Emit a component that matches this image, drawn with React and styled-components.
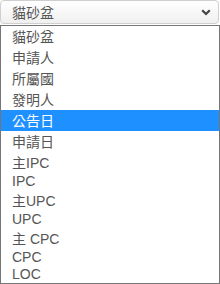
import React from 'react'
import styled, { createGlobalStyle } from 'styled-components'

const GlobalStyle = createGlobalStyle`
  html, body {
    margin: 0;
    padding: 0;
    background: #fff;
  }
  body {
    font-family: "Liberation Sans", "Noto Sans CJK TC", sans-serif;
  }
`

const Wrapper = styled.div`
  width: 220px;
  height: 284px;
  display: flex;
  flex-direction: column;
  overflow: hidden;
`

const SelectBox = styled.div`
  width: 219px;
  height: 30px;
  box-sizing: border-box;
  display: flex;
  align-items: center;
  justify-content: space-between;
  padding: 0 7px 0 11px;
  border: 1px solid #cfcfcf;
  border-radius: 4px;
  background: linear-gradient(#ffffff, #f0f0f0);
  color: #555;
  font-size: 14px;
`

const Chevron = styled.svg`
  width: 10px;
  height: 7px;
`

const ListBox = styled.div`
  flex: 1;
  margin-top: 1px;
  border: 1px solid #767676;
  display: flex;
  flex-direction: column;
  background: #fff;
`

const Option = styled.div`
  padding: 0 0 1px 11px;
  font-size: 14px;
  line-height: normal;
  color: ${p => (p.$active ? '#fff' : '#555')};
  background: ${p => (p.$active ? '#1e90ff' : 'transparent')};
`

const options = [
  '貓砂盆',
  '申請人',
  '所屬國',
  '發明人',
  '公告日',
  '申請日',
  '主IPC',
  'IPC',
  '主UPC',
  'UPC',
  '主 CPC',
  'CPC',
  'LOC'
]

const App = () => (
  <Wrapper>
    <GlobalStyle />
    <SelectBox>
      <span>貓砂盆</span>
      <Chevron viewBox="0 0 10 7">
        <path d="M1.2 1.2 L5 5 L8.8 1.2" fill="none" stroke="#444" strokeWidth="2.2" />
      </Chevron>
    </SelectBox>
    <ListBox>
      {options.map(o => (
        <Option key={o} $active={o === '公告日'}>
          {o}
        </Option>
      ))}
    </ListBox>
  </Wrapper>
)

export default App
